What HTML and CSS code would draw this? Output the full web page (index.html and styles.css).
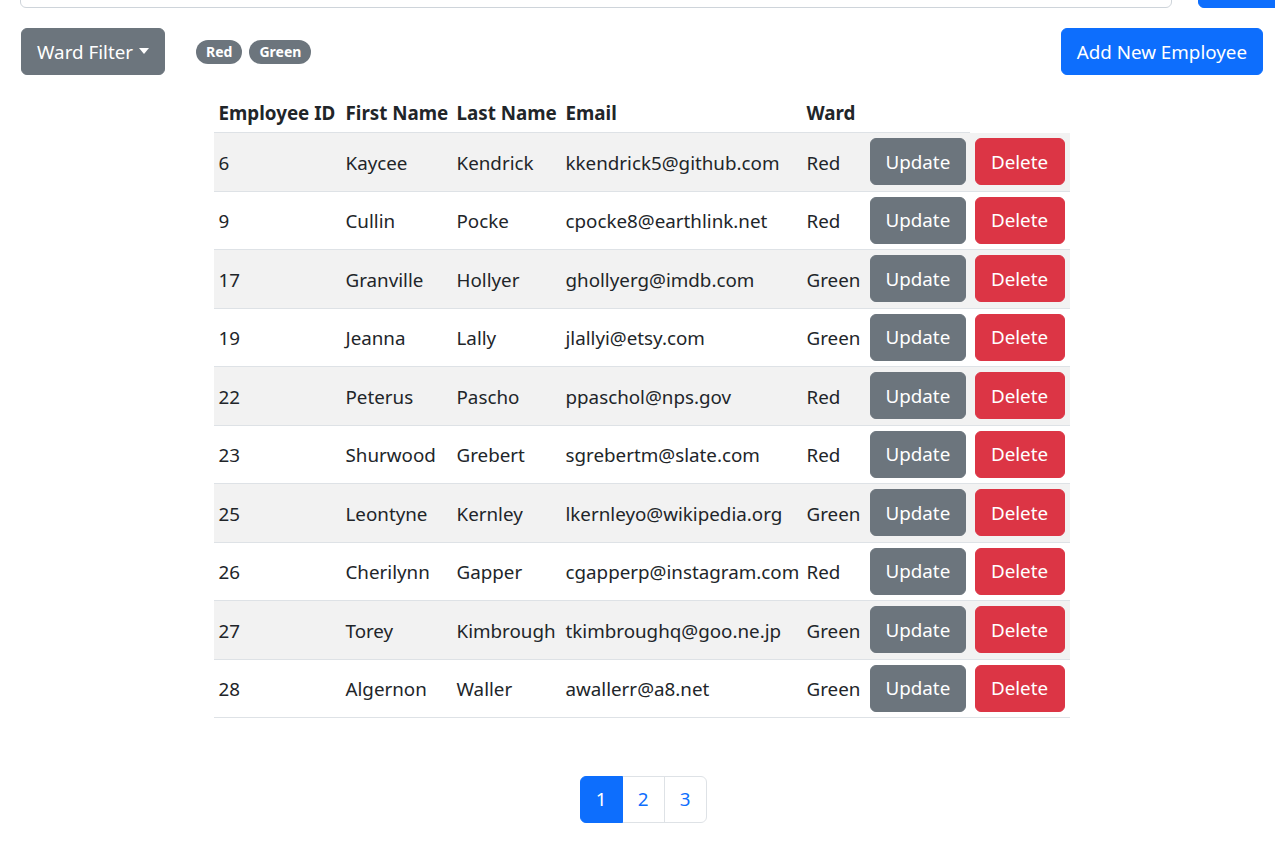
FILE: index.html
```html
<!DOCTYPE html>
<html lang="en">
<head>
<meta charset="utf-8">
<title>Employees</title>
<link rel="stylesheet" href="styles.css">
</head>
<body>
<div class="page">
  <div class="search-row">
    <input class="search-input" type="text">
    <button class="btn btn-primary search-btn">Search</button>
  </div>
  <div class="toolbar">
    <div class="filters">
      <button class="btn btn-secondary dropdown-toggle">Ward Filter</button>
      <div class="badges">
        <span class="badge">Red</span>
        <span class="badge">Green</span>
      </div>
    </div>
    <button class="btn btn-primary">Add New Employee</button>
  </div>
  <table class="emp-table">
    <colgroup>
      <col class="c-id"><col class="c-first"><col class="c-last"><col class="c-email"><col class="c-ward"><col class="c-upd"><col class="c-del">
    </colgroup>
    <thead>
      <tr><th>Employee ID</th><th>First Name</th><th>Last Name</th><th>Email</th><th>Ward</th><th></th></tr>
    </thead>
    <tbody>
      <tr><td>6</td><td>Kaycee</td><td>Kendrick</td><td>kkendrick5@github.com</td><td>Red</td><td><button class="btn btn-secondary">Update</button></td><td><button class="btn btn-danger">Delete</button></td></tr>
      <tr><td>9</td><td>Cullin</td><td>Pocke</td><td>cpocke8@earthlink.net</td><td>Red</td><td><button class="btn btn-secondary">Update</button></td><td><button class="btn btn-danger">Delete</button></td></tr>
      <tr><td>17</td><td>Granville</td><td>Hollyer</td><td>ghollyerg@imdb.com</td><td>Green</td><td><button class="btn btn-secondary">Update</button></td><td><button class="btn btn-danger">Delete</button></td></tr>
      <tr><td>19</td><td>Jeanna</td><td>Lally</td><td>jlallyi@etsy.com</td><td>Green</td><td><button class="btn btn-secondary">Update</button></td><td><button class="btn btn-danger">Delete</button></td></tr>
      <tr><td>22</td><td>Peterus</td><td>Pascho</td><td>ppaschol@nps.gov</td><td>Red</td><td><button class="btn btn-secondary">Update</button></td><td><button class="btn btn-danger">Delete</button></td></tr>
      <tr><td>23</td><td>Shurwood</td><td>Grebert</td><td>sgrebertm@slate.com</td><td>Red</td><td><button class="btn btn-secondary">Update</button></td><td><button class="btn btn-danger">Delete</button></td></tr>
      <tr><td>25</td><td>Leontyne</td><td>Kernley</td><td>lkernleyo@wikipedia.org</td><td>Green</td><td><button class="btn btn-secondary">Update</button></td><td><button class="btn btn-danger">Delete</button></td></tr>
      <tr><td>26</td><td>Cherilynn</td><td>Gapper</td><td>cgapperp@instagram.com</td><td>Red</td><td><button class="btn btn-secondary">Update</button></td><td><button class="btn btn-danger">Delete</button></td></tr>
      <tr><td>27</td><td>Torey</td><td>Kimbrough</td><td>tkimbroughq@goo.ne.jp</td><td>Green</td><td><button class="btn btn-secondary">Update</button></td><td><button class="btn btn-danger">Delete</button></td></tr>
      <tr><td>28</td><td>Algernon</td><td>Waller</td><td>awallerr@a8.net</td><td>Green</td><td><button class="btn btn-secondary">Update</button></td><td><button class="btn btn-danger">Delete</button></td></tr>
    </tbody>
  </table>
  <nav class="pager">
    <a class="page-link active">1</a>
    <a class="page-link">2</a>
    <a class="page-link">3</a>
  </nav>
</div>
</body>
</html>
```

FILE: styles.css
```css
* { box-sizing: border-box; }
html, body { margin: 0; padding: 0; background: #fff; }
body {
  font-family: "Noto Sans", "Open Sans", sans-serif;
  font-size: 18.8px;
  line-height: 30px;
  color: #212529;
  overflow: hidden;
}
.page { padding: 0 12px 0 20px; }
.search-row {
  display: flex;
  gap: 26px;
  margin-top: -39px;
  height: 47px;
}
.search-input {
  flex: 1;
  border: 1px solid #ced4da;
  border-radius: 6px;
  height: 47px;
}
.search-btn { width: 100px; margin-right: -35px; color: transparent; }
.toolbar {
  display: flex;
  justify-content: space-between;
  align-items: center;
  margin-top: 20px;
  padding-left: 1px;
}
.filters { display: flex; align-items: center; gap: 31px; }
.badges { display: flex; gap: 7px; }
.badge {
  display: inline-block;
  background: #6c757d;
  color: #fff;
  font-weight: 700;
  font-size: 14px;
  line-height: 1;
  padding: 5px 10px;
  border-radius: 50px;
}
.btn {
  display: inline-block;
  font-family: inherit;
  font-size: 18.8px;
  line-height: 30px;
  padding: 7.5px 15px;
  border: 1px solid transparent;
  border-radius: 6px;
  color: #fff;
  cursor: pointer;
  white-space: nowrap;
}
.btn-primary { background: #0d6efd; border-color: #0d6efd; }
.btn-secondary { background: #6c757d; border-color: #6c757d; }
.btn-danger { background: #dc3545; border-color: #dc3545; }
.dropdown-toggle::after {
  content: "";
  display: inline-block;
  margin-left: 6px;
  vertical-align: 5px;
  border-top: 6px solid #fff;
  border-left: 5px solid transparent;
  border-right: 5px solid transparent;
}
.emp-table {
  margin: 18px auto 0;
  border-collapse: collapse;
  table-layout: fixed;
  width: 856px;
}
.c-id { width: 127px; }
.c-first { width: 111px; }
.c-last { width: 109px; }
.c-email { width: 241px; }
.c-ward { width: 63px; }
.c-upd { width: 105px; }
.c-del { width: 100px; }
.emp-table th, .emp-table td {
  padding: 5px;
  text-align: left;
  white-space: nowrap;
  border-bottom: 1px solid #dee2e6;
  vertical-align: middle;
}
.emp-table th { font-weight: 700; padding-bottom: 4px; }
.emp-table td { padding-top: 5px; padding-bottom: 5px; height: 58.5px; }
.emp-table td:first-child, .emp-table td:nth-child(2), .emp-table td:nth-child(3),
.emp-table td:nth-child(4), .emp-table td:nth-child(5) { padding-top: 7px; }
.emp-table tbody tr:nth-child(odd) td { background: #f2f2f2; }
.emp-table td:nth-child(6) .btn { width: 96px; }
.emp-table td:nth-child(7) .btn { width: 90px; }
.pager {
  display: flex;
  justify-content: center;
  margin-top: 58px;
  padding-left: 4px;
}
.page-link {
  display: block;
  width: 43px;
  height: 47px;
  line-height: 45px;
  text-align: center;
  color: #0d6efd;
  border: 1px solid #dee2e6;
  margin-left: -1px;
}
.page-link:first-child { border-radius: 6px 0 0 6px; }
.page-link:last-child { border-radius: 0 6px 6px 0; }
.page-link.active { background: #0d6efd; border-color: #0d6efd; color: #fff; position: relative; }
```
